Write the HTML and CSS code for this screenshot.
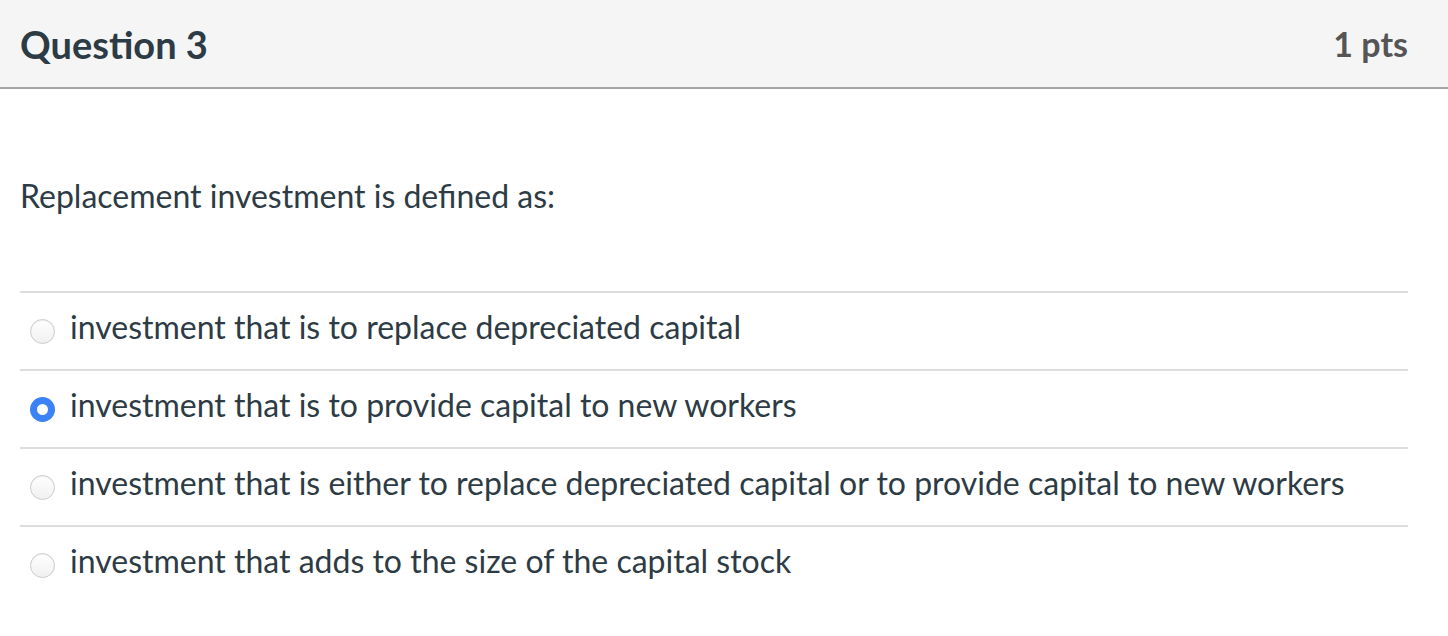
FILE: index.html
```html
<!DOCTYPE html>
<html>
<head>
<meta charset="utf-8">
<link rel="stylesheet" href="styles.css">
</head>
<body>
<div class="question">
  <div class="header">
    <div class="title">Question 3</div>
    <div class="pts">1 pts</div>
  </div>
  <div class="content">
    <div class="text">Replacement investment is defined as:</div>
    <div class="answers">
      <label class="answer"><span class="radio"></span><span class="label">investment that is to replace depreciated capital</span></label>
      <label class="answer"><span class="radio checked"></span><span class="label">investment that is to provide capital to new workers</span></label>
      <label class="answer"><span class="radio"></span><span class="label">investment that is either to replace depreciated capital or to provide capital to new workers</span></label>
      <label class="answer"><span class="radio"></span><span class="label">investment that adds to the size of the capital stock</span></label>
    </div>
  </div>
</div>
</body>
</html>
```
FILE: styles.css
```css
html, body {
  margin: 0;
  padding: 0;
  background: #ffffff;
}
body {
  font-family: Lato, "Liberation Sans", sans-serif;
  color: #2d3b45;
}
.header {
  height: 87px;
  background: #f5f5f5;
  border-bottom: 2px solid #a5a5a5;
  display: flex;
  align-items: center;
  justify-content: space-between;
  padding: 0 40px 0 20px;
}
.title {
  font-size: 38px;
  font-weight: 700;
  color: #2d3b45;
}
.pts {
  font-size: 34px;
  font-weight: 700;
  color: #555555;
}
.content {
  padding: 0 40px 0 20px;
}
.text {
  font-size: 32px;
  line-height: 38px;
  padding-top: 88px;
  height: 202px;
  box-sizing: border-box;
}
.answers {
  display: flex;
  flex-direction: column;
}
.answer {
  display: flex;
  align-items: center;
  height: 76px;
  border-top: 2px solid #dddddd;
  gap: 15px;
  padding-left: 10px;
}
.label {
  font-size: 32px;
  line-height: 38px;
  padding-bottom: 8px;
}
.radio {
  width: 25px;
  height: 25px;
  border-radius: 50%;
  box-sizing: border-box;
  border: 1px solid #cccccc;
  background: linear-gradient(#ffffff, #f0f0f0);
  box-shadow: inset 0 1px 1px rgba(0, 0, 0, 0.06);
  flex: none;
}
.radio.checked {
  border: 7.5px solid #3b82f6;
  background: #ffffff;
  box-shadow: none;
}
```
